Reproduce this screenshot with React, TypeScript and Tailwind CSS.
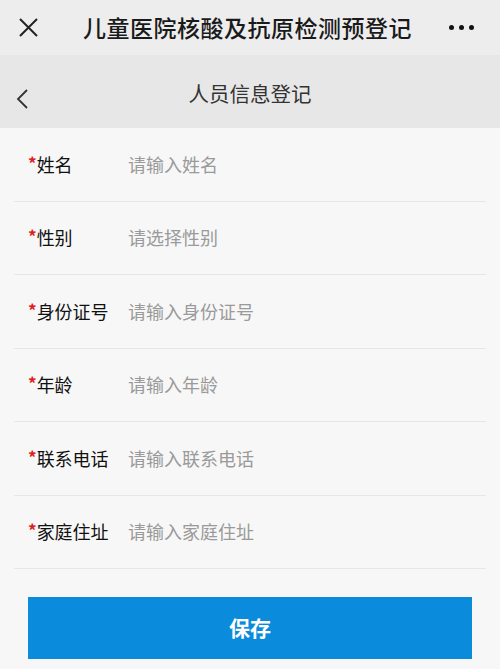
import React from 'react';

const fields = [
  { label: '姓名', placeholder: '请输入姓名' },
  { label: '性别', placeholder: '请选择性别' },
  { label: '身份证号', placeholder: '请输入身份证号' },
  { label: '年龄', placeholder: '请输入年龄' },
  { label: '联系电话', placeholder: '请输入联系电话' },
  { label: '家庭住址', placeholder: '请输入家庭住址' },
];

const App = () => {
  return (
    <div
      className="w-[500px] h-[669px] bg-[#f7f7f7] flex flex-col overflow-hidden"
      style={{ fontFamily: '"Noto Sans CJK SC", "Noto Sans", sans-serif' }}
    >
      {/* top bar */}
      <div className="h-[55px] bg-[#ededed] flex items-center justify-between px-[16px] shrink-0">
        <svg width="24" height="24" viewBox="0 0 24 24" className="text-[#222]">
          <path d="M4 3 L21 20 M21 3 L4 20" stroke="currentColor" strokeWidth="2" fill="none" />
        </svg>
        <h1 className="text-[23px] font-medium text-[#1a1a1a] tracking-[0.5px] ml-[6px]">儿童医院核酸及抗原检测预登记</h1>
        <div className="flex items-center gap-[5px] pr-[10px]">
          <span className="w-[5px] h-[5px] rounded-full bg-[#111]" />
          <span className="w-[5px] h-[5px] rounded-full bg-[#111]" />
          <span className="w-[5px] h-[5px] rounded-full bg-[#111]" />
        </div>
      </div>

      {/* page header */}
      <div className="h-[73px] bg-[#e7e7e7] relative flex items-center justify-center shrink-0">
        <button className="absolute left-[14px] top-[32px] p-0">
          <svg width="16" height="24" viewBox="0 0 16 24" className="text-[#333]">
            <path d="M13 3 L4 12 L13 21" stroke="currentColor" strokeWidth="1.8" fill="none" />
          </svg>
        </button>
        <h2 className="text-[20.5px] text-[#333] pt-[3px]">人员信息登记</h2>
      </div>

      {/* form */}
      <div className="flex flex-col">
        {fields.map((f) => (
          <div key={f.label} className="mx-[14px] h-[73.5px] border-b border-[#e6e6e6] flex items-center pl-[14px]">
            <div className="w-[100px] flex items-center text-[18px] text-[#111]">
              <span className="text-[#e02020] text-[17px] font-bold leading-none -mt-[4px]">*</span>
              {f.label}
            </div>
            <input
              className="flex-1 bg-transparent outline-none text-[18px] text-[#333] placeholder:text-[#9a9a9a]"
              placeholder={f.placeholder}
            />
          </div>
        ))}
      </div>

      <div className="px-[28px] pt-[28px]">
        <button className="w-full h-[62px] bg-[#0a8bdb] text-white text-[21px] font-bold">保存</button>
      </div>
    </div>
  );
};

export default App;
